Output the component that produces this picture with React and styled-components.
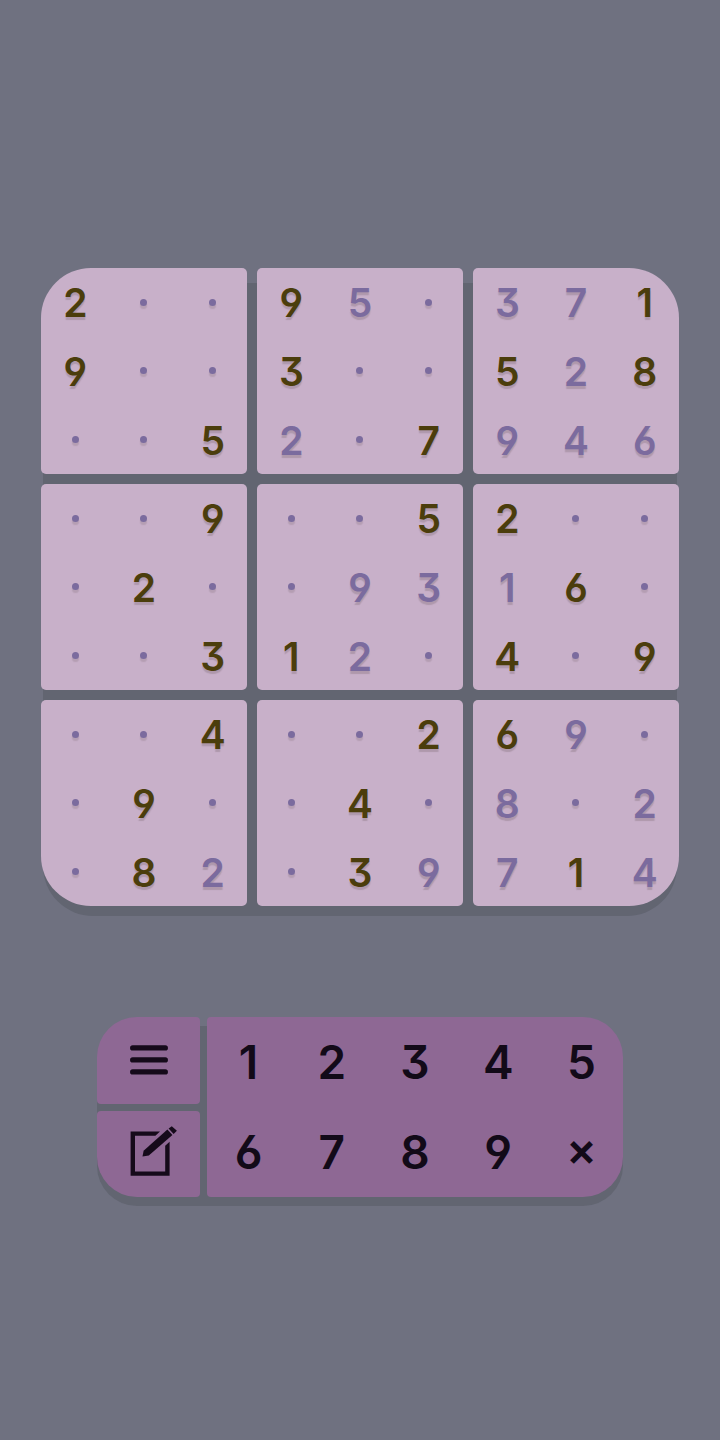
import React, { useState } from 'react';
import styled, { createGlobalStyle } from 'styled-components';

// one string per block, read row by row
// digits in `givens` are fixed, digits in `entries` were filled in by the player
const blocks = [
  { givens: '2..9....5', entries: '.........' },
  { givens: '9..3....7', entries: '.5....2..' },
  { givens: '..15.8...', entries: '37..2.946' },
  { givens: '..9.2...3', entries: '.........' },
  { givens: '..5...1..', entries: '....93.2.' },
  { givens: '2...6.4.9', entries: '...1.....' },
  { givens: '..4.9..8.', entries: '........2' },
  { givens: '..2.4..3.', entries: '........9' },
  { givens: '6......1.', entries: '.9.8.27.4' },
];

const keys = ['1', '2', '3', '4', '5', '6', '7', '8', '9', '×'];

function MenuIcon() {
  return (
    <svg width='39' height='30' viewBox='0 0 39 30' aria-hidden='true'>
      <path
        d='M3.7 2.9h32.6M3.7 14.9h32.6M3.7 26.9h32.6'
        stroke='currentColor'
        strokeWidth='5.3'
        strokeLinecap='round'
      />
    </svg>
  );
}

function NoteIcon() {
  return (
    <svg width='58' height='54' viewBox='0 0 58 54' aria-hidden='true'>
      <g fill='currentColor'>
        <path d='M40 4.6H10.6V48.8H49.6V14.8L45.2 18.8V44.6H15V8.8H35.4Z' />
        <path d='M22.5 29.6L23.6 23.8L47.4 2.4L52.4 8L28.8 28.4Z' />
        <path d='M48.6 1.6L51.8 -0.8L56.9 3.8L53.6 7Z' />
      </g>
    </svg>
  );
}

function App() {
  const [notes, setNotes] = useState(false);

  return (
    <Page>
      <GlobalStyle />
      <Board>
        {blocks.map((block, b) => (
          <Block key={b}>
            {block.givens.split('').map((given, i) => {
              const entry = block.entries[i];
              if (given !== '.') {
                return (
                  <Cell key={i} $given>
                    <Digit>{given}</Digit>
                  </Cell>
                );
              }
              return (
                <Cell key={i} aria-label={entry === '.' ? 'empty' : undefined}>
                  {entry === '.' ? <Dot /> : <Digit>{entry}</Digit>}
                </Cell>
              );
            })}
          </Block>
        ))}
      </Board>

      <Controls>
        <Tools>
          <ToolButton aria-label='Menu'>
            <MenuIcon />
          </ToolButton>
          <ToolButton
            aria-label='Notes'
            aria-pressed={notes}
            onClick={() => setNotes(!notes)}
          >
            <NoteIcon />
          </ToolButton>
        </Tools>
        <Keypad>
          {keys.map((key) => (
            <Key key={key}>{key}</Key>
          ))}
        </Keypad>
      </Controls>
    </Page>
  );
}

export default App;

const GlobalStyle = createGlobalStyle`
  * {
    box-sizing: border-box;
  }

  body {
    margin: 0;
    background: #6f7180;
    font-family: Inter, 'Open Sans', sans-serif;
    /* flat-top three, open six and open nine, raised cross */
    font-feature-settings: 'cv03', 'cv04', 'cv09', 'case';
  }

  button {
    margin: 0;
    padding: 0;
    border: 0;
    background: none;
    font: inherit;
    font-feature-settings: inherit;
    cursor: pointer;
  }
`;

const Page = styled.main`
  min-height: 100vh;
  padding: 268px 41px 0;
`;

const Board = styled.div`
  position: relative;
  display: grid;
  grid-template-columns: repeat(3, 1fr);
  gap: 10px;

  &::before {
    content: '';
    position: absolute;
    z-index: -1;
    inset: 15px 2px -10px;
    border-radius: 50px;
    background: #626571;
  }
`;

const Block = styled.div`
  aspect-ratio: 1;
  display: grid;
  grid-template-columns: repeat(3, 1fr);
  grid-template-rows: repeat(3, 1fr);
  border-radius: 5px;
  background: #c8b0c9;

  &:nth-child(1) {
    border-top-left-radius: 50px;
  }
  &:nth-child(3) {
    border-top-right-radius: 50px;
  }
  &:nth-child(7) {
    border-bottom-left-radius: 50px;
  }
  &:nth-child(9) {
    border-bottom-right-radius: 50px;
  }
`;

const Cell = styled.button`
  display: grid;
  place-items: center;
  color: ${(props) => (props.$given ? '#4b3d0c' : '#7b6b9e')};
`;

const Digit = styled.span`
  padding-top: 2px;
  font-size: 39px;
  font-weight: 600;
  line-height: 48px;
  text-shadow: 0 3px 1px rgba(75, 61, 60, 0.2);
`;

const Dot = styled.span`
  width: 7px;
  height: 7px;
  border-radius: 50%;
  background: currentColor;
  box-shadow: 0 3px 1px rgba(75, 61, 60, 0.15);
`;

const Controls = styled.div`
  position: relative;
  display: flex;
  gap: 7px;
  margin: 111px 56px 0;

  &::before {
    content: '';
    position: absolute;
    z-index: -1;
    inset: 9px 0 -9px;
    border-radius: 40px;
    background: #626571;
  }
`;

const Tools = styled.div`
  flex: 0 0 103px;
  display: grid;
  grid-template-rows: 1fr 1fr;
  gap: 7px;
`;

const ToolButton = styled.button`
  display: grid;
  place-items: center;
  color: #150a1a;

  && {
    border-radius: 4px;
    background: #8e6894;
  }
  &&:first-child {
    border-top-left-radius: 40px;
  }
  &&:last-child {
    border-bottom-left-radius: 40px;
  }

  svg {
    overflow: visible;
  }
`;

const Keypad = styled.div`
  flex: 1;
  display: grid;
  grid-template-columns: repeat(5, 1fr);
  grid-auto-rows: 90px;
  border-radius: 4px 40px 40px 4px;
  background: #8e6894;
`;

const Key = styled.button`
  color: #120a18;
  && {
    font-size: 46px;
    font-weight: 600;
    line-height: 56px;
  }
`;
